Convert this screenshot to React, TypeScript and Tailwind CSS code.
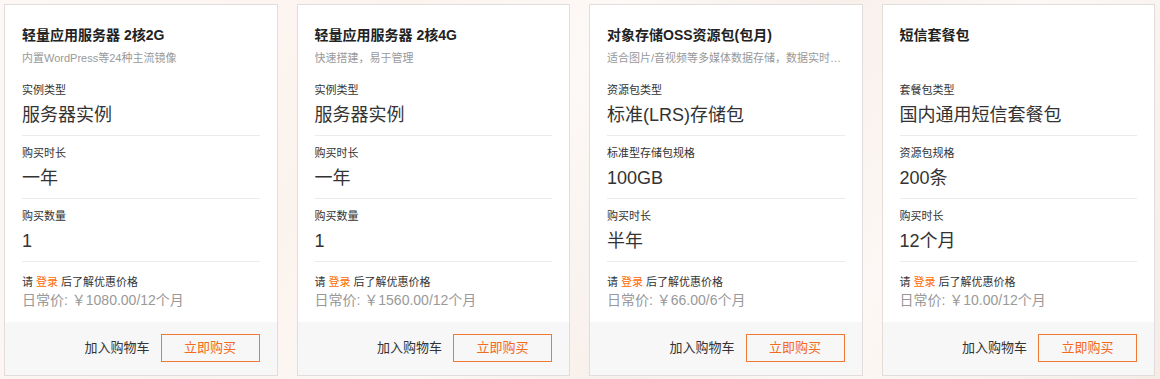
import React from "react";

type Spec = { label: string; value: string };

const products: {
  title: string;
  desc: string;
  specs: Spec[];
  price: string;
}[] = [
  {
    title: "轻量应用服务器 2核2G",
    desc: "内置WordPress等24种主流镜像",
    specs: [
      { label: "实例类型", value: "服务器实例" },
      { label: "购买时长", value: "一年" },
      { label: "购买数量", value: "1" },
    ],
    price: "日常价: ￥1080.00/12个月",
  },
  {
    title: "轻量应用服务器 2核4G",
    desc: "快速搭建，易于管理",
    specs: [
      { label: "实例类型", value: "服务器实例" },
      { label: "购买时长", value: "一年" },
      { label: "购买数量", value: "1" },
    ],
    price: "日常价: ￥1560.00/12个月",
  },
  {
    title: "对象存储OSS资源包(包月)",
    desc: "适合图片/音视频等多媒体数据存储，数据实时处理，海量存储",
    specs: [
      { label: "资源包类型", value: "标准(LRS)存储包" },
      { label: "标准型存储包规格", value: "100GB" },
      { label: "购买时长", value: "半年" },
    ],
    price: "日常价: ￥66.00/6个月",
  },
  {
    title: "短信套餐包",
    desc: "",
    specs: [
      { label: "套餐包类型", value: "国内通用短信套餐包" },
      { label: "资源包规格", value: "200条" },
      { label: "购买时长", value: "12个月" },
    ],
    price: "日常价: ￥10.00/12个月",
  },
];

const font = "font-['Liberation_Sans','Noto_Sans_CJK_SC',sans-serif]";

export default function App() {
  return (
    <div
      className={`${font} w-[1160px] h-[379px] overflow-hidden bg-[#fcf6f2] bg-[linear-gradient(120deg,#fdf8f5_0%,#fbf3ee_30%,#fdf9f6_45%,#f7efea_60%,#fdf8f5_75%,#f5ece6_100%)]`}
    >
      <div className="grid grid-cols-4 gap-[19px] pl-1 pr-[5px] pt-1">
        {products.map((p) => (
          <div
            key={p.title}
            className="bg-white border border-[#e2dddb] flex flex-col"
          >
            <div className="px-[17px] pt-5">
              <div className="text-[14px] leading-5 font-bold text-[#222]">
                {p.title}
              </div>
              <div className="mt-[5px] h-4 text-[11px] leading-4 text-[#999] truncate">
                {p.desc}
              </div>
              {p.specs.map((s, i) => (
                <div
                  key={s.label}
                  className={`border-b border-[#ebebeb] pb-[7px] ${
                    i === 0 ? "pt-4" : "pt-[9px]"
                  }`}
                >
                  <div className="text-[11px] leading-4 text-[#333]">
                    {s.label}
                  </div>
                  <div className="mt-1 text-[18px] leading-[26px] text-[#333]">
                    {s.value}
                  </div>
                </div>
              ))}
              <div className="pt-3 pb-[13px]">
                <div className="text-[11px] leading-4 text-[#333]">
                  请 <span className="text-[#ff6a00]">登录</span> 后了解优惠价格
                </div>
                <div className="mt-px text-[14px] leading-[18px] text-[#999]">
                  {p.price}
                </div>
              </div>
            </div>
            <div className="bg-[#f7f7f7] pt-3 pb-[13px] pr-[17px] flex items-center justify-end gap-[11px]">
              <span className="text-[13px] text-[#333]">加入购物车</span>
              <button className="w-[99px] h-[28px] border border-[#ef7a35] text-[13px] text-[#f26a1b] bg-transparent">
                立即购买
              </button>
            </div>
          </div>
        ))}
      </div>
    </div>
  );
}
